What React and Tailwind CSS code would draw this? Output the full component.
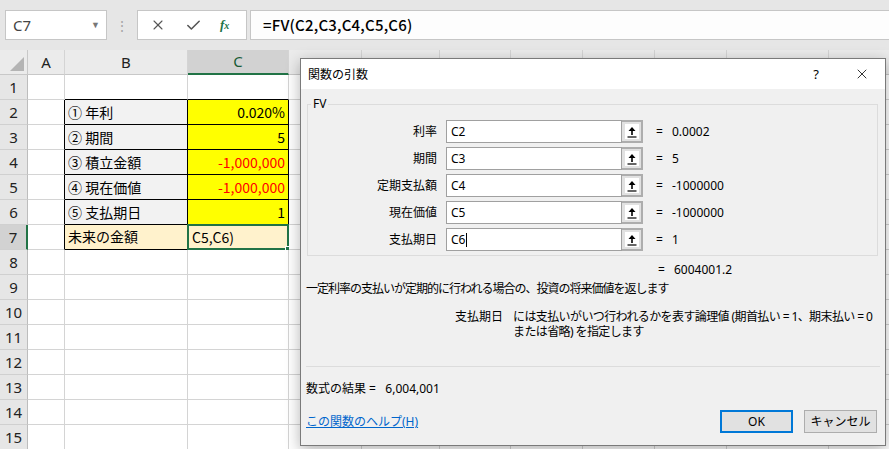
import { X, Check } from 'lucide-react'

const columns = [
  { key: 'A', w: 'w-[37px]' },
  { key: 'B', w: 'w-[123px]' },
  { key: 'C', w: 'w-[101px]' },
  { key: 'D', w: 'w-[73px]' },
  { key: 'E', w: 'w-[78px]' },
  { key: 'F', w: 'w-[71px]' },
  { key: 'G', w: 'w-[72px]' },
  { key: 'H', w: 'w-[72px]' },
  { key: 'I', w: 'w-[72px]' },
  { key: 'J', w: 'w-[102px]' },
  { key: 'K', w: 'w-[72px]' },
]

const tabla = {
  2: { label: '① 年利', value: '0.020%' },
  3: { label: '② 期間', value: '5' },
  4: { label: '③ 積立金額', value: '-1,000,000', red: true },
  5: { label: '④ 現在価値', value: '-1,000,000', red: true },
  6: { label: '⑤ 支払期日', value: '1' },
}

const argumentos = [
  { label: '利率', ref: 'C2', value: '0.0002' },
  { label: '期間', ref: 'C3', value: '5' },
  { label: '定期支払額', ref: 'C4', value: '-1000000' },
  { label: '現在価値', ref: 'C5', value: '-1000000' },
  { label: '支払期日', ref: 'C6', value: '1', cursor: true },
]

const rows = Array.from({ length: 15 }, (_, i) => i + 1)

function cellClasses(r, k) {
  const inTable = r >= 2 && r <= 7 && (k === 'B' || k === 'C')
  let bg = 'bg-white'
  if (inTable) {
    if (r === 7) bg = 'bg-[#fff2cc]'
    else if (k === 'B') bg = 'bg-[#f2f2f2]'
    else bg = 'bg-[#ffff00]'
  }
  const right = inTable || (k === 'A' && r >= 2 && r <= 7) ? 'border-r-black' : 'border-r-[#d4d4d4]'
  const bottom = inTable || (r === 1 && (k === 'B' || k === 'C')) ? 'border-b-black' : 'border-b-[#d4d4d4]'
  return `${bg} ${right} ${bottom}`
}

function Cell({ r, col }) {
  const k = col.key
  let content = null
  if (tabla[r] && k === 'B') {
    content = <span className="pl-[3px]">{tabla[r].label}</span>
  } else if (tabla[r] && k === 'C') {
    content = (
      <span className={`ml-auto pr-[3px] ${tabla[r].red ? 'text-[#ff0000]' : 'text-black'}`}>
        {tabla[r].value}
      </span>
    )
  } else if (r === 7 && k === 'B') {
    content = <span className="pl-[3px] -mt-[3px]">未来の金額</span>
  } else if (r === 7 && k === 'C') {
    content = <span className="pl-[4px]">C5,C6)</span>
  }

  return (
    <div
      className={`relative flex h-[25px] shrink-0 items-center border-r border-b text-[14px] leading-none ${col.w} ${cellClasses(r, k)}`}
    >
      {content}
      {r === 7 && k === 'C' && (
        <div className="absolute -top-px -left-px -right-px -bottom-px border-2 border-[#217346]">
          <div className="absolute -right-[4px] -bottom-[4px] h-[6px] w-[6px] border border-white bg-[#217346]" />
        </div>
      )}
    </div>
  )
}

function FlechaRef() {
  return (
    <svg width="10" height="12" viewBox="0 0 10 12">
      <path d="M5 2.5 V9" stroke="black" strokeWidth="1.6" />
      <path d="M1.5 5 L5 1 L8.5 5 Z" fill="black" />
      <path d="M0.5 11 H9.5" stroke="black" strokeWidth="1.2" />
    </svg>
  )
}

function Dialogo() {
  return (
    <div className="absolute left-[300px] top-[58px] flex h-[388px] w-[586px] flex-col border border-[#7a7a7a] bg-[#f0f0f0] font-['Noto_Sans','Noto_Sans_CJK_JP',sans-serif] text-[12px] leading-[15px] text-black shadow-[0_4px_14px_rgba(0,0,0,0.3)]">
      <div className="flex h-[30px] shrink-0 items-center bg-white pl-[7px]">
        <span>関数の引数</span>
        <span className="ml-auto mr-[35px] text-[13px]">?</span>
        <X size={16} strokeWidth={1.2} className="mr-[15px]" />
      </div>

      <fieldset className="mx-[6px] mt-[8px] h-[159px] w-[571px] border border-[#dcdcdc] px-0 pb-0">
        <legend className="ml-[3px] px-[2px] leading-[14px]">FV</legend>
        <div className="mt-[9px] flex flex-col gap-[4px]">
          {argumentos.map((a) => (
            <div key={a.label} className="flex h-[23px] items-center">
              <span className="w-[130px] pr-[1px] text-right">{a.label}</span>
              <div className="ml-[8px] flex h-[23px] w-[176px] items-center border border-[#a0a0a0] bg-white pl-[4px]">
                {a.ref}
                {a.cursor && <span className="ml-px inline-block h-[14px] w-px bg-black" />}
              </div>
              <div className="flex h-[23px] w-[21px] items-center justify-center border-2 border-l-0 border-[#adadad] bg-[#e1e1e1]">
                <div className="flex h-[15px] w-[14px] items-center justify-center bg-white">
                  <FlechaRef />
                </div>
              </div>
              <span className="ml-[13px] w-[16px]">=</span>
              <span>{a.value}</span>
            </div>
          ))}
        </div>
      </fieldset>

      <div className="mt-[6px] flex pl-[357px]">
        <span className="w-[16px]">=</span>
        <span>6004001.2</span>
      </div>
      <p className="mt-[4px] pl-[5px] tracking-[-1px]">
        一定利率の支払いが定期的に行われる場合の、投資の将来価値を返します
      </p>
      <div className="mt-[13px] flex">
        <span className="w-[207px] pr-[5px] text-right">支払期日</span>
        <p className="w-[370px] pl-[5px] tracking-[-0.6px]">
          には支払いがいつ行われるかを表す論理値 (期首払い = 1、期末払い = 0
          <br />
          または省略) を指定します
        </p>
      </div>
      <div className="mx-[5px] mt-[27px] h-px bg-[#dcdcdc]" />
      <div className="mt-[14px] pl-[5px]">
        数式の結果 =&nbsp;&nbsp; 6,004,001
      </div>
      <div className="mt-[14px] flex items-center pl-[5px] pr-[8px]">
        <span className="text-[#0066cc] underline">この関数のヘルプ(H)</span>
        <button className="ml-auto h-[23px] w-[73px] border-2 border-[#0078d7] bg-[#e1e1e1]">OK</button>
        <button className="ml-[11px] h-[23px] w-[73px] border border-[#adadad] bg-[#e1e1e1]">キャンセル</button>
      </div>
    </div>
  )
}

export default function App() {
  return (
    <div className="relative h-[449px] w-[889px] overflow-hidden bg-white font-['Noto_Sans_CJK_JP',sans-serif] text-black">
      <div className="flex h-[50px] items-start bg-[#e6e6e6] pl-[5px] pt-[10px]">
        <div className="flex h-[30px] w-[102px] items-center border border-[#c6c6c6] bg-white pl-[7px] font-['Noto_Sans',sans-serif] text-[15px] text-[#444]">
          C7
          <span className="ml-auto mr-[6px] text-[9px] text-[#777]">▼</span>
        </div>
        <div className="flex h-[30px] w-[30px] items-center justify-center text-[14px] text-[#a6a6a6]">⋮</div>
        <div className="flex h-[30px] w-[110px] items-center border border-[#c6c6c6] bg-white">
          <X size={16} strokeWidth={1.6} className="ml-[12px] text-[#555]" />
          <Check size={17} strokeWidth={2.2} className="ml-[19px] text-[#555]" />
          <span className="ml-[18px] font-['Liberation_Serif',serif] text-[13px] font-bold italic text-[#217346]">
            f<span className="text-[10px]">x</span>
          </span>
        </div>
        <div className="-mr-px ml-[3px] flex h-[30px] flex-1 items-center border border-[#c6c6c6] bg-[#fdfdfd] pl-[12px] text-[15px] font-medium tracking-[0.2px]">
          =FV(C2,C3,C4,C5,C6)
        </div>
      </div>

      <div className="flex h-[25px] bg-[#ebebeb] font-['Noto_Sans',sans-serif] text-[15px] text-[#222]">
        <div className="relative h-[25px] w-[28px] shrink-0 border-r border-b border-[#c8c8c8]">
          <div className="absolute right-[3px] bottom-[3px] h-0 w-0 border-l-[14px] border-t-[14px] border-l-transparent border-t-transparent border-b-0 border-r-0 [border-bottom:14px_solid_#b4b4b4] [border-left:14px_solid_transparent]" />
        </div>
        {columns.map((c) => (
          <div
            key={c.key}
            className={`flex h-[25px] shrink-0 items-center justify-center border-r border-[#d4d4d4] ${c.w} ${
              c.key === 'C' ? 'border-b-2 border-b-[#217346] bg-[#d2d2d2] text-[#185c37]' : 'border-b border-b-[#c8c8c8]'
            }`}
          >
            {c.key}
          </div>
        ))}
      </div>

      {rows.map((r) => (
        <div key={r} className="flex">
          <div
            className={`flex h-[25px] w-[28px] shrink-0 items-center justify-center border-b border-b-[#d0d0d0] font-['Noto_Sans',sans-serif] text-[15px] text-[#222] ${
              r === 7 ? 'border-r-2 border-r-[#217346] bg-[#d2d2d2]' : 'border-r border-r-[#bdbdbd] bg-[#e6e6e6]'
            }`}
          >
            {r}
          </div>
          {columns.map((c) => (
            <Cell key={c.key} r={r} col={c} />
          ))}
        </div>
      ))}

      <Dialogo />
    </div>
  )
}
